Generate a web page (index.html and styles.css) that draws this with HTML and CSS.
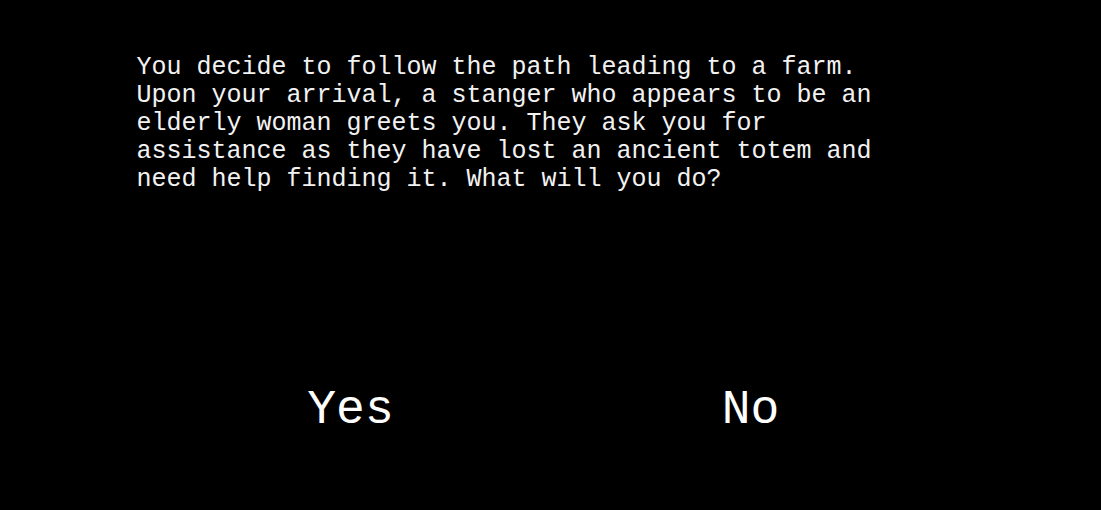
FILE: index.html
```html
<!DOCTYPE html>
<html>
<head>
<meta charset="utf-8">
<link rel="stylesheet" href="styles.css">
</head>
<body>
<main class="game">
  <p class="story">You decide to follow the path leading to a farm.<br>Upon your arrival, a stanger who appears to be an<br>elderly woman greets you. They ask you for<br>assistance as they have lost an ancient totem and<br>need help finding it. What will you do?</p>
  <div class="choices">
    <button class="choice">Yes</button>
    <button class="choice">No</button>
  </div>
</main>
</body>
</html>
```
FILE: styles.css
```css
html, body {
  margin: 0;
  padding: 0;
  background: #000;
  height: 100%;
}
body {
  font-family: "Courier New", Courier, "Nimbus Mono PS", "Nimbus Mono L", FreeMono, "Liberation Mono", monospace;
  color: #f2f2f2;
}
.game {
  padding-top: 54px;
  display: flex;
  flex-direction: column;
  align-items: center;
}
.story {
  margin: 0;
  width: 830px;
  padding-left: 1px;
  box-sizing: border-box;
  font-size: 25px;
  line-height: 28px;
}
.choices {
  margin-top: 189px;
  width: 800px;
  display: grid;
  grid-template-columns: 1fr 1fr;
}
.choice {
  background: none;
  border: none;
  padding: 0;
  color: #fff;
  font-family: inherit;
  font-size: 48px;
  line-height: 54px;
  justify-self: center;
  cursor: pointer;
}
```
